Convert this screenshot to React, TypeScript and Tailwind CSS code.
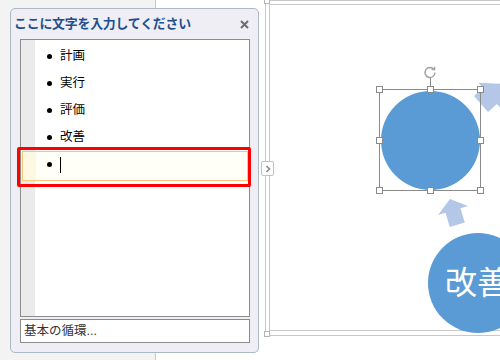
import React from 'react';

const items = ['計画', '実行', '評価', '改善'];

function Handle({ x, y }: { x: number; y: number }) {
  return (
    <div
      className="absolute h-[7px] w-[7px] border border-[#8a8a8a] bg-white"
      style={{ left: x - 3, top: y - 3 }}
    />
  );
}

export default function App() {
  const handles = [
    [379, 89], [430, 89], [480, 89],
    [379, 140], [480, 140],
    [379, 190], [430, 190], [480, 190],
  ];

  return (
    <div className="relative flex h-[360px] w-[500px] overflow-hidden bg-white font-['Liberation_Sans','Noto_Sans_CJK_JP',sans-serif]">
      {/* thumbnail pane */}
      <div className="h-full w-[156px] border-r border-[#c9c9c9] bg-[#f3f3f3]" />

      {/* slide canvas */}
      <div className="relative h-full flex-1 bg-white">
        <div className="absolute left-[109px] top-0 h-[336px] w-[300px] border border-[#c8c8c8]">
          <div className="absolute left-[3px] top-[3px] h-[327px] w-[300px] border border-[#c8c8c8]" />
        </div>
        <div className="absolute left-[108px] top-[-2px] h-[6px] w-[6px] border border-[#b5b5b5] bg-white" />
        <div className="absolute left-[108px] top-[331px] h-[6px] w-[6px] border border-[#b5b5b5] bg-white" />
      </div>

      {/* arrows */}
      <svg className="absolute left-0 top-0" width="500" height="360" viewBox="0 0 500 360">
        <polygon
          points="450,199 468,206 460.5,208.3 464.8,222.6 449.8,227.1 445.5,212.8 438,215"
          fill="#b4c7e7"
        />
        <polygon
          points="474,96 483,88 478.4,82.7 503,84 506,109 501.6,109.3 497,104 488,112"
          fill="#b4c7e7"
        />
      </svg>

      {/* selected circle */}
      <div className="absolute left-[381px] top-[91px] h-[99px] w-[99px] rounded-full bg-[#5b9bd5]" />
      <div className="absolute left-[379px] top-[89px] h-[102px] w-[102px] border border-[#8a8a8a]" />
      <div className="absolute left-[430px] top-[78px] h-[11px] w-px bg-[#8a8a8a]" />
      <svg className="absolute left-[423px] top-[65px]" width="14" height="14" viewBox="0 0 14 14">
        <path d="M11 4.5 A5 5 0 1 0 12 7.5" fill="none" stroke="#a0a0a0" strokeWidth="1.4" />
        <path d="M8.5 4.5 L11.5 4.8 L11.8 1.8" fill="none" stroke="#a0a0a0" strokeWidth="1.2" />
      </svg>
      {handles.map(([x, y]) => (
        <Handle key={`${x}-${y}`} x={x} y={y} />
      ))}

      {/* 改善 circle */}
      <div className="absolute left-[428px] top-[233px] flex h-[100px] w-[100px] items-center rounded-full bg-[#5b9bd5] pl-[17px]">
        <span className="whitespace-nowrap text-[32px] leading-none text-white">改善</span>
      </div>

      {/* collapse tab */}
      <div className="absolute left-[261px] top-[161px] flex h-[15px] w-[13px] items-center justify-center rounded-[2px] border border-[#c2c2c2] bg-white">
        <svg width="6" height="8" viewBox="0 0 6 8">
          <path d="M1.5 1 L4.5 4 L1.5 7" fill="none" stroke="#8a8a8a" strokeWidth="1.6" />
        </svg>
      </div>

      {/* text pane */}
      <div className="absolute left-[10px] top-[8px] flex h-[345px] w-[249px] flex-col rounded-[5px] border border-[#aab9c3] bg-[#eeeef4]">
        <div className="flex h-[30px] items-center justify-between pl-[3px] pr-[9px]">
          <span className="text-[12.9px] font-bold tracking-[-0.2px] text-[#1f4e8f]">
            ここに文字を入力してください
          </span>
          <svg width="9" height="9" viewBox="0 0 9 9">
            <path d="M1 1 L8 8 M8 1 L1 8" stroke="#6e6e6e" strokeWidth="2" />
          </svg>
        </div>

        <div className="relative ml-[9px] mr-[8px] flex h-[278px] border border-[#8c8c8c] bg-white">
          <div className="h-full w-[14px] bg-[#ebebeb]" />
          <div className="absolute left-[1px] top-[111px] flex h-[30px] w-[226px] border border-[#f7c67d] bg-[#fffef7]">
            <div className="h-full w-[13px] bg-[#fdf8e2]" />
          </div>
          <div className="relative flex flex-1 flex-col pt-[3px]">
            {items.map((t) => (
              <div key={t} className="flex h-[27px] items-center gap-[8px] pl-[12px]">
                <span className="h-[5px] w-[5px] rounded-full bg-black" />
                <span className="text-[12.5px] text-black">{t}</span>
              </div>
            ))}
            <div className="flex h-[27px] items-center gap-[8px] pl-[12px]">
              <span className="h-[5px] w-[5px] rounded-full bg-black" />
              <span className="h-[16px] w-px bg-black" />
            </div>
          </div>
        </div>

        <div className="ml-[9px] mr-[8px] mt-[2px] flex h-[24px] items-center border border-[#8c8c8c] bg-white pl-[3px]">
          <span className="text-[12.5px] text-[#333333]">基本の循環...</span>
        </div>
      </div>

      {/* annotation */}
      <div className="absolute left-[17px] top-[147px] h-[40px] w-[234px] rounded-[2px] border-[3px] border-[#ff0000]" />
    </div>
  );
}
